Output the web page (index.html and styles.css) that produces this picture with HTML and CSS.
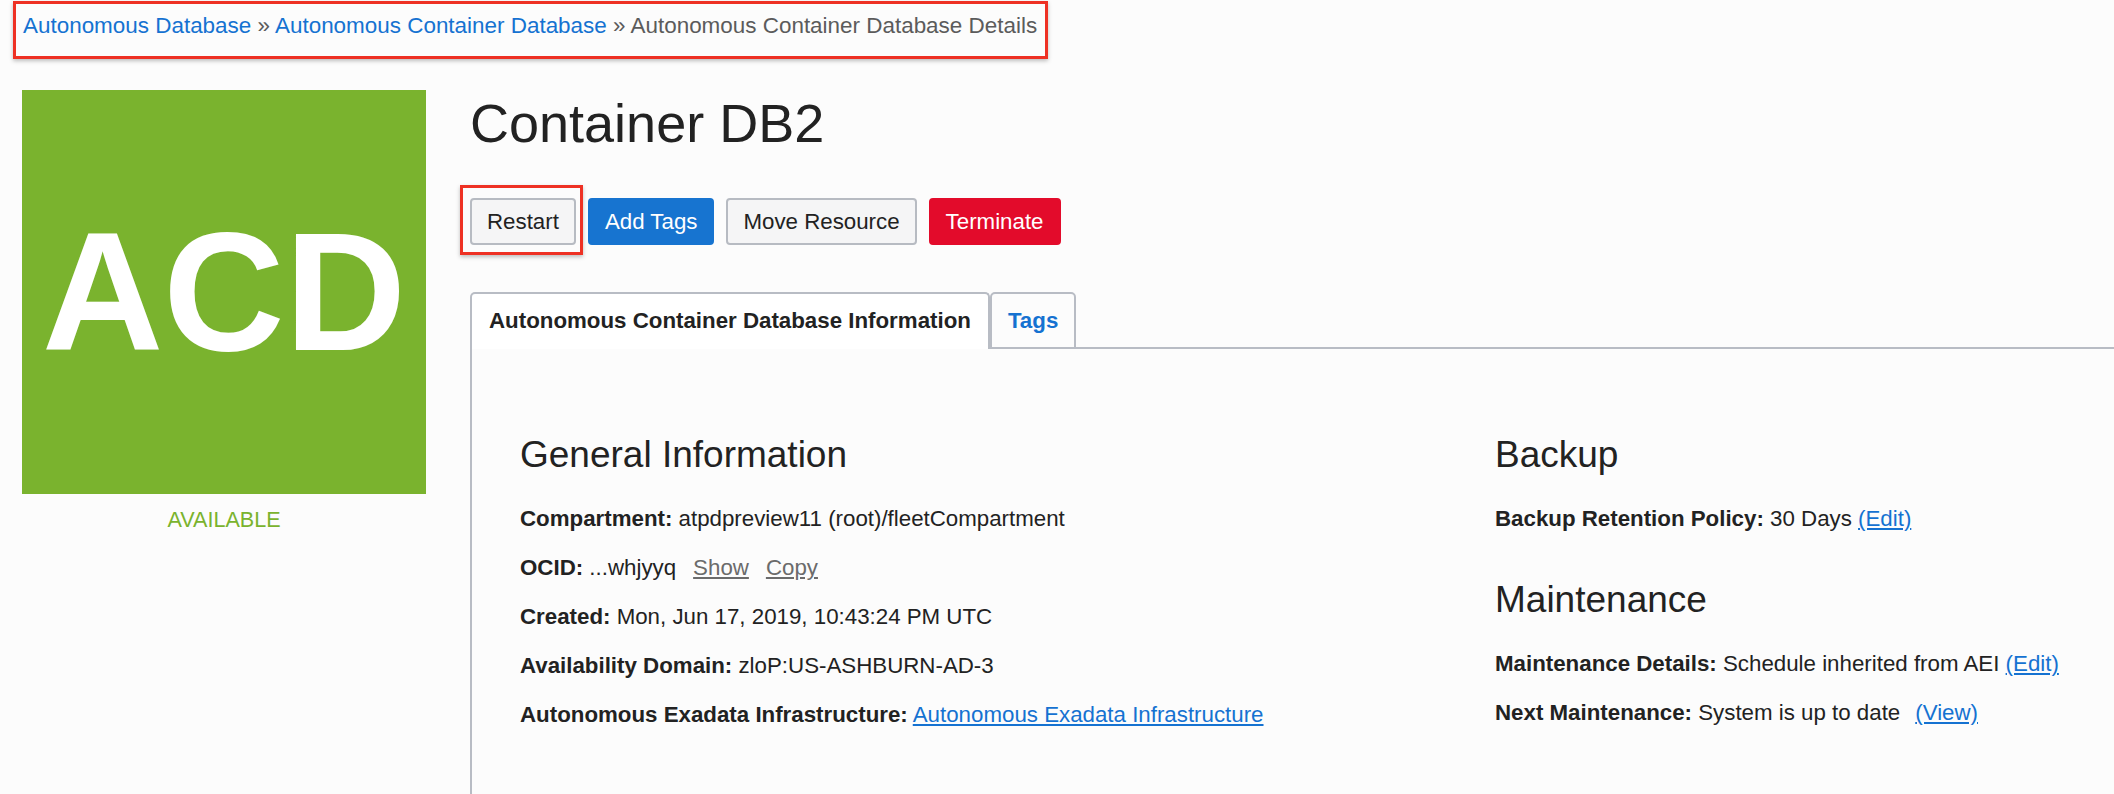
FILE: index.html
```html
<!DOCTYPE html>
<html lang="en">
<head>
<meta charset="utf-8">
<title>Container DB2 - Autonomous Container Database Details</title>
<link rel="stylesheet" href="styles.css">
</head>
<body>
<nav class="crumbs">
  <a class="crumb-link" href="#">Autonomous Database</a>
  <span class="crumb-sep">»</span>
  <a class="crumb-link" href="#">Autonomous Container Database</a>
  <span class="crumb-sep">»</span>
  <span class="crumb-current">Autonomous Container Database Details</span>
</nav>

<div class="page">
  <aside class="side">
    <div class="badge">ACD</div>
    <div class="status">AVAILABLE</div>
  </aside>

  <main class="main">
    <h1 class="title">Container DB2</h1>

    <div class="actions">
      <span class="highlight"><button class="btn">Restart</button></span>
      <button class="btn btn-primary">Add Tags</button>
      <button class="btn">Move Resource</button>
      <button class="btn btn-danger">Terminate</button>
    </div>

    <div class="tabs">
      <div class="tab tab-active">Autonomous Container Database Information</div>
      <div class="tab tab-link">Tags</div>
      <div class="tab-fill"></div>
    </div>

    <div class="panel">
      <div class="columns">
        <section class="section">
          <h2 class="section-title">General Information</h2>
          <div class="row"><span class="label">Compartment:</span> atpdpreview11 (root)/fleetCompartment</div>
          <div class="row"><span class="label">OCID:</span> ...whjyyq<a class="action" href="#">Show</a><a class="action" href="#">Copy</a></div>
          <div class="row"><span class="label">Created:</span> Mon, Jun 17, 2019, 10:43:24 PM UTC</div>
          <div class="row"><span class="label">Availability Domain:</span> zloP:US-ASHBURN-AD-3</div>
          <div class="row"><span class="label">Autonomous Exadata Infrastructure:</span> <a class="link" href="#">Autonomous Exadata Infrastructure</a></div>
        </section>

        <div class="side-sections">
          <section class="section">
            <h2 class="section-title">Backup</h2>
            <div class="row"><span class="label">Backup Retention Policy:</span> 30 Days <a class="link" href="#">(Edit)</a></div>
          </section>
          <section class="section section-next">
            <h2 class="section-title">Maintenance</h2>
            <div class="row"><span class="label">Maintenance Details:</span> Schedule inherited from AEI <a class="link" href="#">(Edit)</a></div>
            <div class="row"><span class="label">Next Maintenance:</span> System is up to date<a class="link link-gap" href="#">(View)</a></div>
          </section>
        </div>
      </div>
    </div>
  </main>
</div>
</body>
</html>
```

FILE: styles.css
```css
html, body {
  margin: 0;
  padding: 0;
}

body {
  background: #fcfcfc;
  color: #222;
  font-family: "Liberation Sans", Arial, Helvetica, sans-serif;
  font-size: 22.3px;
  overflow: hidden;
}

a {
  text-decoration: none;
}

/* breadcrumb with annotation frame */
.crumbs {
  display: inline-block;
  margin: 1px 0 0 13px;
  padding: 0 8px 9px 7px;
  border: 3px solid #ee3124;
  box-shadow: 0 2px 4px rgba(0, 0, 0, 0.25);
  font-size: 22.45px;
  line-height: 43px;
  white-space: nowrap;
  color: #5b5b5b;
}

.crumb-link {
  color: #1572d1;
}

.crumb-sep,
.crumb-current {
  color: #5b5b5b;
}

/* page layout */
.page {
  display: flex;
  gap: 44px;
  margin-top: 31px;
  padding-left: 22px;
}

.side {
  width: 404px;
  flex: 0 0 404px;
}

.badge {
  width: 404px;
  height: 404px;
  background: #7ab32e;
  color: #fff;
  font-weight: bold;
  font-size: 168px;
  display: flex;
  align-items: center;
  justify-content: center;
  line-height: 1;
}

.status {
  margin-top: 13px;
  text-align: center;
  color: #7ab32e;
  font-size: 21.6px;
  line-height: 26px;
}

.main {
  flex: 1;
  min-width: 0;
}

.title {
  margin: 0;
  font-size: 54px;
  font-weight: normal;
  line-height: 66px;
  color: #222;
}

/* action buttons */
.actions {
  display: flex;
  align-items: center;
  gap: 12px;
  margin-top: 42px;
}

.btn {
  height: 47px;
  padding: 0 15px;
  border: 2px solid #b7bbc2;
  border-radius: 4px;
  background: #f5f5f6;
  color: #222;
  font-family: inherit;
  font-size: 22.3px;
  line-height: 43px;
  cursor: pointer;
}

.btn-primary {
  background: #1774d0;
  border-color: #1774d0;
  color: #fff;
}

.btn-danger {
  background: #e30b2b;
  border-color: #e30b2b;
  color: #fff;
}

.highlight {
  position: relative;
  display: inline-flex;
}

.highlight::after {
  content: "";
  position: absolute;
  left: -10px;
  top: -13px;
  right: -7px;
  bottom: -10px;
  border: 3px solid #ee3124;
  box-shadow: 0 2px 4px rgba(0, 0, 0, 0.25);
  pointer-events: none;
}

/* tabs */
.tabs {
  display: flex;
  align-items: flex-end;
  margin-top: 47px;
}

.tab {
  height: 57px;
  box-sizing: border-box;
  padding: 0 17px;
  border: 2px solid #b8bcc4;
  border-radius: 5px 5px 0 0;
  font-weight: bold;
  line-height: 53px;
  white-space: nowrap;
}

.tab-active {
  border-bottom: none;
  background: #fff;
  color: #222;
  line-height: 54px;
}

.tab-link {
  color: #1572d1;
  padding: 0 16px;
}

.tab-fill {
  flex: 1;
  border-bottom: 2px solid #b8bcc4;
}

/* content panel */
.panel {
  border-left: 2px solid #b8bcc4;
  padding: 84px 0 0 48px;
  min-height: 500px;
}

.columns {
  display: grid;
  grid-template-columns: 975px 1fr;
}

.section-title {
  margin: 0 0 17px;
  font-size: 37px;
  font-weight: normal;
  line-height: 44px;
  color: #222;
}

.section-next {
  margin-top: 35px;
}

.row {
  line-height: 49px;
  white-space: nowrap;
}

.label {
  font-weight: bold;
}

.link {
  color: #1572d1;
  text-decoration: underline;
}

.link-gap {
  margin-left: 15px;
}

.action {
  margin-left: 17px;
  color: #6b6b6b;
  text-decoration: underline;
}
```
